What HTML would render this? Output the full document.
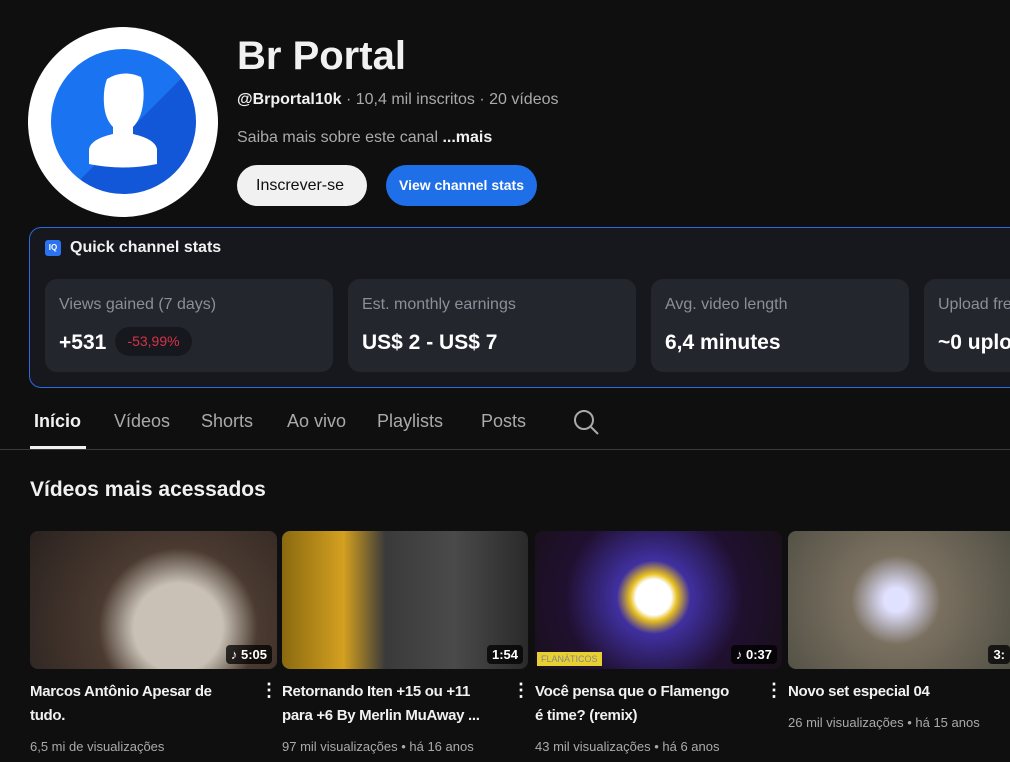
<!DOCTYPE html>
<html><head><meta charset="utf-8"><style>
*{margin:0;padding:0;box-sizing:border-box}
html,body{width:1010px;height:762px;overflow:hidden}
body{background:#0f0f0f;font-family:"Liberation Sans",sans-serif;color:#f1f1f1;position:relative}
#w{position:absolute;left:0;top:0;width:1010px;height:762px;overflow:hidden}
.a{position:absolute}
.card{position:absolute;top:279px;height:93px;background:#24262e;border-radius:12px}
.card .l{position:absolute;left:14px;top:17px;font-size:16px;color:#8b8f99}
.card .v{position:absolute;left:14px;top:52px;font-size:21px;font-weight:bold;color:#fff}
.tab{position:absolute;top:411px;font-size:18px;color:#aaa}
.th{position:absolute;top:531px;height:138px;border-radius:8px;overflow:hidden}
.dur{position:absolute;bottom:5px;right:5px;background:rgba(0,0,0,.75);color:#fff;font-size:13px;font-weight:bold;padding:2px 5px;border-radius:4px}
.t{position:absolute;top:680px;font-size:15px;font-weight:bold;line-height:24px;width:215px;color:#f1f1f1;letter-spacing:-0.3px}
.m{position:absolute;font-size:13px;color:#aaa}
.dots{position:absolute;top:680px;font-size:18px;font-weight:bold;color:#fff}
</style></head><body><div id="w">
<div class="a" style="left:28px;top:27px;width:190px;height:190px;border-radius:50%;background:#fff"></div>
<div class="a" style="left:51px;top:49px;width:145px;height:145px;border-radius:50%;background:linear-gradient(135deg,#1a73f0 55%,#1257d8 55%);overflow:hidden">
<svg width="145" height="145" viewBox="0 0 145 145"><path d="M56 30 Q72 20 90 28 Q94 40 92 55 Q90 70 82 78 L82 85 Q104 90 106 100 L106 115 Q72 122 38 115 L38 100 Q40 90 62 85 L62 78 Q54 70 53 55 Q52 40 56 30 Z" fill="#fff"/></svg></div>
<div class="a" style="left:237px;top:34px;font-size:40px;font-weight:bold;color:#f1f1f1">Br Portal</div>
<div class="a" style="left:237px;top:91px;font-size:16px;color:#aaa"><b style="color:#f1f1f1">@Brportal10k</b> · 10,4 mil inscritos · 20 vídeos</div>
<div class="a" style="left:237px;top:129px;font-size:16px;color:#aaa">Saiba mais sobre este canal <b style="color:#f1f1f1">...mais</b></div>
<div class="a" style="left:237px;top:165px;width:130px;height:41px;border-radius:21px;background:#f1f1f1;color:#0f0f0f;font-size:16px;line-height:41px;padding-left:19px;overflow:hidden;white-space:nowrap"><span style="display:inline-block;width:92px;overflow:hidden;vertical-align:top">Inscrever-se</span></div>
<div class="a" style="left:386px;top:165px;width:151px;height:41px;border-radius:21px;background:#1f6fe8;color:#fff;font-size:14px;font-weight:bold;line-height:41px;text-align:center">View channel stats</div>
<div class="a" style="left:29px;top:227px;width:1000px;height:161px;border:1px solid #2a6ae0;border-radius:12px;background:#17181e"></div>
<div class="a" style="left:45px;top:240px;width:16px;height:16px;background:#2b73f0;border-radius:3px;font-size:8px;font-weight:bold;text-align:center;line-height:16px;color:#fff">IQ</div>
<div class="a" style="left:70px;top:239px;font-size:16px;font-weight:bold">Quick channel stats</div>
<div class="card" style="left:45px;width:288px"><div class="l">Views gained (7 days)</div><div class="v">+531</div><div class="a" style="left:70px;top:48px;height:29px;width:77px;border-radius:15px;background:#17181e;color:#d6334a;font-size:14px;line-height:29px;text-align:center">-53,99%</div></div>
<div class="card" style="left:348px;width:288px"><div class="l">Est. monthly earnings</div><div class="v">US$ 2 - US$ 7</div></div>
<div class="card" style="left:651px;width:258px"><div class="l">Avg. video length</div><div class="v">6,4 minutes</div></div>
<div class="card" style="left:924px;width:200px"><div class="l">Upload frequency</div><div class="v">~0 uploads</div></div>
<div class="tab" style="left:34px;color:#f1f1f1;font-weight:bold">Início</div>
<div class="a" style="left:30px;top:446px;width:56px;height:3px;background:#f1f1f1"></div>
<div class="tab" style="left:114px">Vídeos</div>
<div class="tab" style="left:201px">Shorts</div>
<div class="tab" style="left:287px">Ao vivo</div>
<div class="tab" style="left:377px">Playlists</div>
<div class="tab" style="left:481px">Posts</div>
<svg class="a" style="left:572px;top:408px" width="28" height="28" viewBox="0 0 28 28"><circle cx="12" cy="12" r="9" fill="none" stroke="#aaa" stroke-width="2"/><line x1="19" y1="19" x2="26" y2="26" stroke="#aaa" stroke-width="2"/></svg>
<div class="a" style="left:0;top:449px;width:1010px;height:1px;background:#3a3a3a"></div>
<div class="a" style="left:30px;top:478px;font-size:21px;font-weight:bold">Vídeos mais acessados</div>
<div class="th" style="left:30px;width:247px;background:radial-gradient(circle at 60% 70%,#c9c1b5 0 25%,#4a3a30 45%,#2a2220)"><div class="dur">♪ 5:05</div></div>
<div class="th" style="left:282px;width:246px;background:linear-gradient(90deg,#8a6a10 0,#d4a020 25%,#3a3a3a 42%,#4a4a4a 70%,#2a2a2a)"><div class="dur">1:54</div></div>
<div class="th" style="left:535px;width:247px;background:radial-gradient(circle at 48% 48%,#fff 0 12%,#e8c020 16%,#4030a0 25%,#201030 60%,#181018)"><div class="a" style="left:2px;bottom:3px;background:#e8d030;color:#888;font-size:9px;padding:2px 4px">FLANÁTICOS</div><div class="dur">♪ 0:37</div></div>
<div class="th" style="left:788px;width:240px;background:radial-gradient(circle at 45% 50%,#e0e0ff 0 8%,#7a7060 30%,#4a4a40)"><div class="dur" style="right:18px">3:</div></div>
<div class="t" style="left:30px">Marcos Antônio Apesar de tudo.</div>
<div class="m" style="left:30px;top:739px">6,5 mi de visualizações</div>
<div class="dots" style="left:260px">⋮</div>
<div class="t" style="left:282px;white-space:nowrap">Retornando Iten +15 ou +11<br>para +6 By Merlin MuAway ...</div>
<div class="m" style="left:282px;top:739px">97 mil visualizações • há 16 anos</div>
<div class="dots" style="left:512px">⋮</div>
<div class="t" style="left:535px;white-space:nowrap">Você pensa que o Flamengo<br>é time? (remix)</div>
<div class="m" style="left:535px;top:739px">43 mil visualizações • há 6 anos</div>
<div class="dots" style="left:765px">⋮</div>
<div class="t" style="left:788px">Novo set especial 04</div>
<div class="m" style="left:788px;top:715px">26 mil visualizações • há 15 anos</div>
</div></body></html>
